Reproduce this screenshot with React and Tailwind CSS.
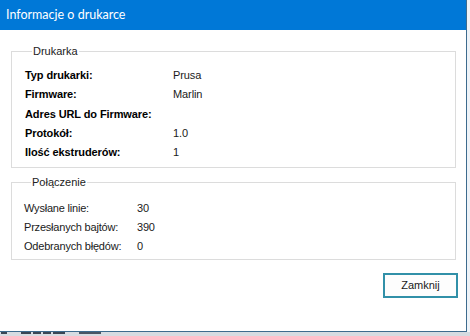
import React from "react";

const printerRows = [
  { label: "Typ drukarki:", value: "Prusa" },
  { label: "Firmware:", value: "Marlin" },
  { label: "Adres URL do Firmware:", value: "" },
  { label: "Protokół:", value: "1.0" },
  { label: "Ilość ekstruderów:", value: "1" },
];

const connectionRows = [
  { label: "Wysłane linie:", value: "30" },
  { label: "Przesłanych bajtów:", value: "390" },
  { label: "Odebranych błędów:", value: "0" },
];

const GroupBox = ({ title, children, className }) => (
  <fieldset className={`border border-[#dcdcdc] ${className}`}>
    <legend className="ml-[7px] px-[1px] text-[11px] leading-[13px] text-[#222]">
      {title}
    </legend>
    {children}
  </fieldset>
);

const App = () => {
  return (
    <div
      className="w-[470px] h-[336px] overflow-hidden flex flex-col bg-[#dfe4ea]"
      style={{ fontFamily: '"Liberation Sans", Arial, sans-serif' }}
    >
      <div className="flex h-[332px]">
        {/* dialog window */}
        <div className="w-[467px] flex flex-col border-r border-b border-[#3d6b8e] bg-white">
          <div className="h-[30px] bg-[#0078d7] flex items-center pl-[6px] shrink-0">
            <span
              className="text-white text-[12.5px]"
              style={{ fontFamily: '"Segoe UI", Lato, sans-serif' }}
            >
              Informacje o drukarce
            </span>
          </div>

          <div className="flex-1 flex flex-col pl-[11px] pr-[10px] pt-[15px]">
            <GroupBox title="Drukarka" className="h-[123px] pl-[13px] pt-[8px]">
              <div className="grid grid-cols-[148px_1fr] text-[11px] tracking-[-0.1px]">
                {printerRows.map((row) => (
                  <React.Fragment key={row.label}>
                    <div className="h-[19.3px] leading-[19.3px] font-bold text-black">
                      {row.label}
                    </div>
                    <div className="h-[19.3px] leading-[19.3px] text-[#1a1a1a]">
                      {row.value}
                    </div>
                  </React.Fragment>
                ))}
              </div>
            </GroupBox>

            <GroupBox title="Połączenie" className="mt-[8px] h-[84px] pl-[12px] pt-[10px]">
              <div className="grid grid-cols-[113px_1fr] text-[11px] tracking-[-0.2px] text-[#1a1a1a]">
                {connectionRows.map((row) => (
                  <React.Fragment key={row.label}>
                    <div className="h-[19px] leading-[19px]">{row.label}</div>
                    <div className="h-[19px] leading-[19px]">{row.value}</div>
                  </React.Fragment>
                ))}
              </div>
            </GroupBox>

            <div className="flex justify-end mt-[13px] -mr-[2px]">
              <button className="w-[75px] h-[25px] border-2 border-[#3190a8] bg-[#fdfdfd] text-[11px] text-[#1a1a1a]">
                Zamknij
              </button>
            </div>
          </div>
        </div>
        <div className="flex-1 bg-[#eef3f8]" />
      </div>

      {/* window behind, peeking out */}
      <div className="flex-1 flex items-start gap-[14px] pl-[1px] bg-[#d6dbe1]">
        <div className="w-[6px] h-[2px] bg-[#3a4654]" />
        <div className="flex gap-[2px]">
          <div className="w-[10px] h-[2px] bg-[#3a4654]" />
          <div className="w-[8px] h-[2px] bg-[#3a4654]" />
          <div className="w-[8px] h-[2px] bg-[#3a4654]" />
          <div className="w-[12px] h-[2px] bg-[#3a4654]" />
        </div>
        <div className="w-[22px] h-[2px] bg-[#4a5664]" />
      </div>
    </div>
  );
};

export default App;
